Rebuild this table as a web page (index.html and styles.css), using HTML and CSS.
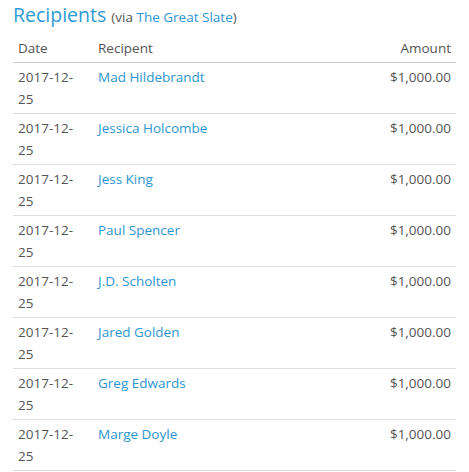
FILE: index.html
```html
<!DOCTYPE html>
<html>
<head>
<meta charset="utf-8">
<link rel="stylesheet" href="styles.css">
</head>
<body>
<div class="wrap">
  <h2 class="title">Recipients <small>(via <a href="#">The Great Slate</a>)</small></h2>
  <table class="tbl">
    <thead>
      <tr><th class="c-date">Date</th><th>Recipent</th><th class="c-amt">Amount</th></tr>
    </thead>
    <tbody>
      <tr><td>2017-12-<wbr>25</td><td><a href="#">Mad Hildebrandt</a></td><td class="c-amt">$1,000.00</td></tr>
      <tr><td>2017-12-<wbr>25</td><td><a href="#">Jessica Holcombe</a></td><td class="c-amt">$1,000.00</td></tr>
      <tr><td>2017-12-<wbr>25</td><td><a href="#">Jess King</a></td><td class="c-amt">$1,000.00</td></tr>
      <tr><td>2017-12-<wbr>25</td><td><a href="#">Paul Spencer</a></td><td class="c-amt">$1,000.00</td></tr>
      <tr><td>2017-12-<wbr>25</td><td><a href="#">J.D. Scholten</a></td><td class="c-amt">$1,000.00</td></tr>
      <tr><td>2017-12-<wbr>25</td><td><a href="#">Jared Golden</a></td><td class="c-amt">$1,000.00</td></tr>
      <tr><td>2017-12-<wbr>25</td><td><a href="#">Greg Edwards</a></td><td class="c-amt">$1,000.00</td></tr>
      <tr><td>2017-12-<wbr>25</td><td><a href="#">Marge Doyle</a></td><td class="c-amt">$1,000.00</td></tr>
    </tbody>
  </table>
</div>
</body>
</html>
```
FILE: styles.css
```css
html, body {
  margin: 0;
  padding: 0;
  background: #fff;
}
body {
  font-family: "Open Sans", "Noto Sans", sans-serif;
  font-size: 13.5px;
  color: #555;
}
.wrap {
  padding: 0 13px;
}
a {
  color: #2e95d0;
  text-decoration: none;
}
.title {
  margin: 2px 0 0;
  font-size: 19.5px;
  font-weight: normal;
  line-height: 26px;
  color: #2e9bd6;
}
.title small {
  font-size: 13.5px;
  color: #555;
}
.tbl {
  width: 100%;
  border-collapse: collapse;
  margin-top: 4px;
}
.tbl th, .tbl td {
  padding: 3px 5px;
  line-height: 22px;
  text-align: left;
  vertical-align: top;
  font-weight: normal;
}
.tbl th {
  border-bottom: 1px solid #ccc;
}
.tbl td {
  border-bottom: 1px solid #ddd;
}
.tbl .c-date {
  width: 70px;
}
.tbl .c-amt {
  text-align: right;
}
```
